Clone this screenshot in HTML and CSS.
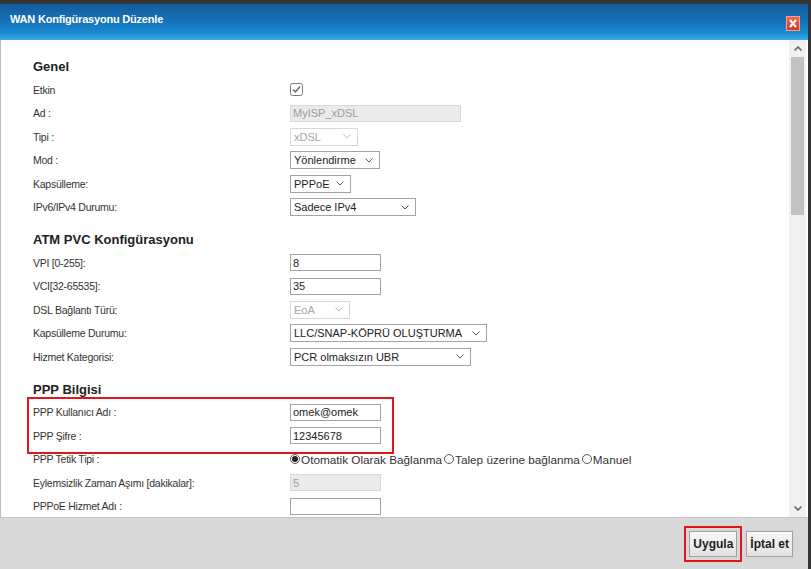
FILE: index.html
```html
<!DOCTYPE html>
<html lang="tr">
<head>
    <meta charset="UTF-8">
    <title>WAN Konfigürasyonu Düzenle</title>
    <link rel="stylesheet" href="styles.css">
</head>
<body>
<div class="pencere">
    <div class="baslik">
        <span class="baslik-yazi">WAN Konfigürasyonu Düzenle</span>
        <span class="kapat">
            <svg width="8" height="9" viewBox="0 0 8 9"><path d="M1 1 L7 8 M7 1 L1 8" stroke="#fff" stroke-width="2"/></svg>
        </span>
    </div>

    <div class="govde">
        <div class="form">
            <section class="bolum">
                <h2>Genel</h2>
                <div class="satir">
                    <label>Etkin</label>
                    <svg class="kutu" width="13" height="13" viewBox="0 0 13 13"><rect x="0.5" y="0.5" width="12" height="12" rx="2" fill="#fff" stroke="#7a7a7a"/><path d="M3 6.5 L5.5 9 L10 3.5" fill="none" stroke="#6a6a6a" stroke-width="1.5"/></svg>
                </div>
                <div class="satir">
                    <label>Ad :</label>
                    <input type="text" class="alan pasif genis" value="MyISP_xDSL" disabled>
                </div>
                <div class="satir">
                    <label>Tipi :</label>
                    <span class="secim pasif sec-tip">xDSL<svg width="8" height="5" viewBox="0 0 8 5"><path d="M0.5 0.5 L4 4 L7.5 0.5" fill="none" stroke="#bbb"/></svg></span>
                </div>
                <div class="satir">
                    <label>Mod :</label>
                    <span class="secim sec-mod">Yönlendirme<svg width="8" height="5" viewBox="0 0 8 5"><path d="M0.5 0.5 L4 4 L7.5 0.5" fill="none" stroke="#555"/></svg></span>
                </div>
                <div class="satir">
                    <label>Kapsülleme:</label>
                    <span class="secim sec-kaps">PPPoE<svg width="8" height="5" viewBox="0 0 8 5"><path d="M0.5 0.5 L4 4 L7.5 0.5" fill="none" stroke="#555"/></svg></span>
                </div>
                <div class="satir">
                    <label>IPv6/IPv4 Durumu:</label>
                    <span class="secim sec-ip">Sadece IPv4<svg width="8" height="5" viewBox="0 0 8 5"><path d="M0.5 0.5 L4 4 L7.5 0.5" fill="none" stroke="#555"/></svg></span>
                </div>
            </section>

            <section class="bolum">
                <h2>ATM PVC Konfigürasyonu</h2>
                <div class="satir">
                    <label>VPI [0-255]:</label>
                    <input type="text" class="alan" value="8">
                </div>
                <div class="satir">
                    <label>VCI[32-65535]:</label>
                    <input type="text" class="alan" value="35">
                </div>
                <div class="satir">
                    <label>DSL Bağlantı Türü:</label>
                    <span class="secim pasif sec-dsl">EoA<svg width="8" height="5" viewBox="0 0 8 5"><path d="M0.5 0.5 L4 4 L7.5 0.5" fill="none" stroke="#bbb"/></svg></span>
                </div>
                <div class="satir">
                    <label>Kapsülleme Durumu:</label>
                    <span class="secim sec-durum">LLC/SNAP-KÖPRÜ OLUŞTURMA<svg width="8" height="5" viewBox="0 0 8 5"><path d="M0.5 0.5 L4 4 L7.5 0.5" fill="none" stroke="#555"/></svg></span>
                </div>
                <div class="satir">
                    <label>Hizmet Kategorisi:</label>
                    <span class="secim sec-hizmet">PCR olmaksızın UBR<svg width="8" height="5" viewBox="0 0 8 5"><path d="M0.5 0.5 L4 4 L7.5 0.5" fill="none" stroke="#555"/></svg></span>
                </div>
            </section>

            <section class="bolum">
                <h2>PPP Bilgisi</h2>
                <div class="vurgu-grup">
                    <div class="satir">
                        <label>PPP Kullanıcı Adı :</label>
                        <input type="text" class="alan" value="omek@omek">
                    </div>
                    <div class="satir">
                        <label>PPP Şifre :</label>
                        <input type="text" class="alan" value="12345678">
                    </div>
                </div>
                <div class="satir">
                    <label>PPP Tetik Tipi :</label>
                    <span class="secenek"><span class="radyo secili"></span>Otomatik Olarak Bağlanma</span>
                    <span class="secenek"><span class="radyo"></span>Talep üzerine bağlanma</span>
                    <span class="secenek"><span class="radyo"></span>Manuel</span>
                </div>
                <div class="satir">
                    <label>Eylemsizlik Zaman Aşımı [dakikalar]:</label>
                    <input type="text" class="alan pasif" value="5" disabled>
                </div>
                <div class="satir">
                    <label>PPPoE Hizmet Adı :</label>
                    <input type="text" class="alan" value="">
                </div>
            </section>
        </div>

        <div class="kaydirma">
            <span class="ok"><svg width="8" height="5" viewBox="0 0 8 5"><path d="M0.5 4.5 L4 1 L7.5 4.5" fill="none" stroke="#606060" stroke-width="1.5"/></svg></span>
            <span class="tutamac"></span>
            <span class="bosluk"></span>
            <span class="ok"><svg width="8" height="5" viewBox="0 0 8 5"><path d="M0.5 0.5 L4 4 L7.5 0.5" fill="none" stroke="#606060" stroke-width="1.5"/></svg></span>
        </div>
    </div>

    <div class="alt">
        <button class="dugme vurgu">Uygula</button>
        <button class="dugme">İptal et</button>
    </div>
</div>
</body>
</html>
```

FILE: styles.css
```css
* {
    margin: 0;
    padding: 0;
    box-sizing: border-box;
}
body {
    background-color: #343434;
    padding-top: 4px;
    font-family: "Liberation Sans", Arial, sans-serif;
    font-size: 11px;
    color: #333;
}
.pencere {
    width: 808px;
    height: 565px;
    display: flex;
    flex-direction: column;
    background-color: #fff;
}

/* baslik cubugu */
.baslik {
    height: 36px;
    flex: none;
    display: flex;
    align-items: center;
    justify-content: space-between;
    padding: 0 8px 0 10px;
    background: linear-gradient(to bottom, #135c9b 0%, #1670b5 45%, #1a8ad2 80%, #3ba9e6 100%);
}
.baslik-yazi {
    color: #fff;
    font-weight: bold;
    font-size: 11px;
    letter-spacing: -0.2px;
    margin-bottom: 6px;
}
.kapat {
    width: 14px;
    height: 15px;
    margin-top: 2px;
    display: flex;
    align-items: center;
    justify-content: center;
    background: linear-gradient(to bottom, #f3674f, #d8381f);
    border: 1px solid #f2a493;
}

/* form alani */
.govde {
    flex: 1;
    display: flex;
    border-left: 1px solid #bdbdbd;
    overflow: hidden;
}
.form {
    flex: 1;
    padding: 16px 0 0 32px;
    overflow: hidden;
}
.bolum + .bolum {
    margin-top: 10px;
}
h2 {
    font-size: 13px;
    line-height: 22px;
    color: #222;
}
.satir {
    height: 23.5px;
    display: flex;
    align-items: center;
}
.satir label {
    width: 257px;
    flex: none;
    font-size: 10.5px;
    letter-spacing: -0.25px;
}
.kutu {
    display: block;
}
.alan {
    width: 91px;
    height: 17px;
    border: 1px solid #a3a3a3;
    padding: 0 2px;
    font: inherit;
    color: #222;
    background-color: #fff;
}
.alan.genis {
    width: 171px;
}
.alan.pasif {
    background-color: #ebebeb;
    border-color: #d8d8d8;
    color: #9c9c9c;
}
.secim {
    height: 18px;
    display: inline-flex;
    align-items: center;
    justify-content: space-between;
    padding: 0 6px 0 3px;
    border: 1px solid #a3a3a3;
    color: #222;
    background-color: #fff;
}
.secim.pasif {
    border-color: #d8d8d8;
    color: #a6a6a6;
}
.sec-tip { width: 68px; }
.sec-mod { width: 90px; }
.sec-kaps { width: 61px; }
.sec-ip { width: 126px; }
.sec-dsl { width: 60px; }
.sec-durum { width: 197px; }
.sec-hizmet { width: 181px; }

.secenek {
    display: inline-flex;
    align-items: center;
    margin-right: 2px;
    font-size: 11.75px;
    color: #333;
}
.radyo {
    width: 10px;
    height: 10px;
    border: 1px solid #555;
    border-radius: 50%;
    margin-right: 1px;
    display: inline-flex;
    align-items: center;
    justify-content: center;
    background-color: #fff;
}
.radyo.secili::after {
    content: "";
    width: 6px;
    height: 6px;
    border-radius: 50%;
    background-color: #222;
}

/* kirmizi isaret cercevesi */
.vurgu-grup {
    position: relative;
}
.vurgu-grup::after {
    content: "";
    position: absolute;
    left: -6px;
    top: -3.5px;
    width: 363px;
    height: 53px;
    border: 2px solid #e3141c;
}

/* kaydirma cubugu */
.kaydirma {
    width: 17px;
    margin-right: 2px;
    flex: none;
    display: flex;
    flex-direction: column;
    background-color: #f0f0f0;
}
.ok {
    height: 17px;
    flex: none;
    display: flex;
    align-items: center;
    justify-content: center;
}
.tutamac {
    height: 158px;
    margin: 0 2px;
    background-color: #c2c2c2;
}
.bosluk {
    flex: 1;
}

/* alt butonlar */
.alt {
    height: 52px;
    flex: none;
    display: flex;
    justify-content: flex-end;
    align-items: center;
    gap: 9px;
    padding-right: 15px;
    border-top: 1px solid #c4c4c4;
    background-color: #d8d8d8;
}
.dugme {
    height: 26px;
    padding: 0 3px;
    font-family: "Liberation Sans", Arial, sans-serif;
    font-size: 12px;
    font-weight: bold;
    color: #222;
    border: 1px solid #a0a0a0;
    border-radius: 0;
    background: linear-gradient(to bottom, #f8f8f8, #e2e2e2);
}
.dugme.vurgu {
    outline: 2px solid #e3141c;
    outline-offset: 3px;
}
```
